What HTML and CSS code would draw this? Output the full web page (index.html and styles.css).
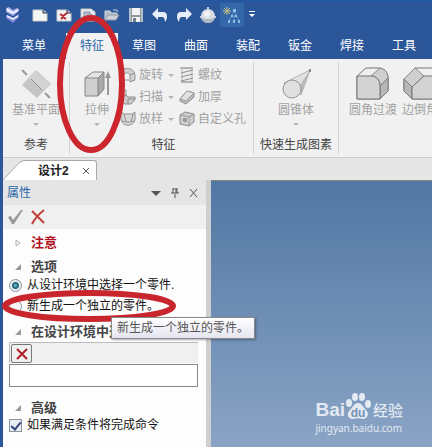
FILE: index.html
```
<!DOCTYPE html>
<html lang="zh-CN">
<head>
	<meta charset="UTF-8">
	<title>设计2</title>
	<link rel="stylesheet" href="styles.css">
</head>
<body>
	<div class="app">
		<div class="quick">
			<svg class="logo" width="16" height="16" viewBox="0 0 16 16"><path d="M1 8l3 1 4 2 6-4v3l-6 6-7-5z" fill="#8185dc"/><path d="M2 8l6 3 5-3v2l-5 3-6-3z" fill="#eceeff"/><path d="M1 1l3-1 4 3 4-2 2 1v2L8 9 1 5z" fill="#a3a8ea"/><path d="M2 1l6 4 5-3v2L8 7 2 4z" fill="#f6f7ff"/></svg>
			<button class="qbtn" aria-label="新建"><svg width="16" height="14" viewBox="0 0 16 14"><path d="M1 2h10l4 3v8H1z" fill="#f4f6f4" stroke="#c9cfcc"/><path d="M11 2v3h4" fill="#ccd" stroke="#222c40"/></svg></button>
			<button class="qbtn" aria-label="新建零件"><svg width="16" height="14" viewBox="0 0 16 14"><path d="M1 2h10l4 3v8H1z" fill="#f4f4f2" stroke="#c9cfcc"/><path d="M11 2v3h4" fill="#ccd" stroke="#222c40"/><path d="M4 6l3 2 4-3M5 11l2-2 3 2" stroke="#b62832" stroke-width="2" fill="none"/></svg></button>
			<button class="qbtn" aria-label="新建图纸"><svg width="16" height="14" viewBox="0 0 16 14"><path d="M1 1h10l4 3v9H1z" fill="#e6eaf0" stroke="#c9cfcc"/><path d="M4 4h6v6H4z" fill="#b8c2cf" stroke="#8995a8"/><circle cx="10" cy="9" r="3" fill="#d8dde4" stroke="#8995a8"/></svg></button>
			<button class="qbtn" aria-label="打开"><svg width="16" height="14" viewBox="0 0 16 14"><path d="M1 12V3h5l1 2h6v2" fill="#b5bcc5" stroke="#d3d7dc"/><path d="M1 12l3-5h11l-3 5z" fill="#cdd2d8" stroke="#8f98a5"/><path d="M9 2h4l1 2" stroke="#c9d1dc" fill="none"/></svg></button>
			<button class="qbtn" aria-label="保存"><svg width="16" height="16" viewBox="0 0 16 16"><path d="M1 1h14v14H1z" fill="#8f9aa6"/><path d="M4 1h8v7H4zM4 10h8v5H4z" fill="#f0f2f3"/><path d="M1 1h2v14H1zM13 1h2v14h-2z" fill="#b5bdc5"/><path d="M5 11h3v4H5z" fill="#707d8c"/></svg></button>
			<button class="qbtn" aria-label="撤销"><svg width="16" height="14" viewBox="0 0 16 14"><path d="M0 6l6-6v4h5c3 0 4 2 4 4 0 3-1 5-2 6 0-3-1-5-3-5H6v3z" fill="#e6eef8"/></svg></button>
			<button class="qbtn" aria-label="重做"><svg width="16" height="14" viewBox="0 0 16 14"><path d="M16 6l-6-6v4H5C2 4 1 6 1 8c0 3 1 5 2 6 0-3 1-5 3-5h4v3z" fill="#e6eef8"/></svg></button>
			<button class="qbtn" aria-label="智能图素"><svg width="16" height="16" viewBox="0 0 16 16"><path d="M8 0v4M0 10h16" stroke="#c2cbd6" stroke-width="2"/><circle cx="8" cy="9" r="7" fill="#d7dde2"/><path d="M1 10c3 3 11 3 14 0-1 8-13 8-14 0z" fill="#adb8c1"/><circle cx="7" cy="7" r="3" fill="#f0f2f5"/></svg></button>
			<button class="qbtn lit" aria-label="设计树"><svg width="18" height="18" viewBox="0 0 18 18"><path d="M4 1v8M0 5h8M1 2l6 6M7 2L1 8" stroke="#c8bf83"/><path d="M11 5l-5 10M11 5l5 10M8 10h6M11 10v5" stroke="#7fa8d6" stroke-dasharray="2 1" fill="none"/><path d="M10 3h3v3h-3zM8 9h2v2H8zM12 9h2v2h-2zM5 14h2v3H5zM10 14h2v3h-2zM15 14h2v3h-2z" fill="#8ec0e6"/></svg></button>
			<button class="qmore" aria-label="更多"><svg width="6" height="7" viewBox="0 0 6 7"><path d="M0 0h6v1H0zM0 3h6L3 6z" fill="#fff"/></svg></button>
		</div>
		<nav class="tabs">
			<button class="tab menu">菜单</button>
			<button class="tab current">特征</button>
			<button class="tab">草图</button>
			<button class="tab">曲面</button>
			<button class="tab">装配</button>
			<button class="tab">钣金</button>
			<button class="tab">焊接</button>
			<button class="tab">工具</button>
		</nav>
		<div class="frame">
			<div class="ribbon">
				<section class="group">
					<div class="tools">
						<button class="big">
							<svg width="32" height="32" viewBox="0 0 32 32"><path d="M2 2l5 5M25 25l5 5" stroke="#999" stroke-width="2"/><path d="M16 2l15 14-14 14L2 17z" fill="#c5c5c5"/><path d="M16 3l14 13-7 7L8 10z" fill="#d2d2d2"/><path d="M11 11l11 11" stroke="#929292"/></svg>
							<span>基准平面</span><i class="caret"></i>
						</button>
					</div>
					<h2>参考</h2>
				</section>
				<section class="group features">
					<div class="tools">
						<button class="big">
							<svg width="32" height="32" viewBox="0 0 32 32"><path d="M4 10l8-6h11l-6 6z" fill="#e5e5e5"/><path d="M17 10l6-6v17l-6 7z" fill="#a9a9a9"/><path d="M4 10h13v18H4z" fill="#cfcfcf"/><path d="M4 10l8-6h11v17l-6 7H4zM4 10h13v18M17 10l6-6" stroke="#858585" fill="none"/><path d="M27 27V8" stroke="#999" stroke-width="2"/><path d="M27 3l3 7h-6z" fill="#999"/></svg>
							<span>拉伸</span><i class="caret"></i>
						</button>
						<div class="smalls">
							<button class="small"><svg width="16" height="16" viewBox="0 0 16 16"><path d="M1 6c1-5 9-7 13-1l1 3v5l-5 2V8c-2-3-5-3-6 0z" fill="#d1d1d1" stroke="#929292"/><path d="M10 8l5-2M3 13h6" stroke="#929292"/></svg><span>旋转</span><i class="caret"></i></button>
							<button class="small"><svg width="16" height="16" viewBox="0 0 16 16"><path d="M1 1h5v5H1z" fill="#ddd" stroke="#999"/><path d="M3 8l3-2 2 2h7v3l-4 4H5c-3-1-3-4-2-7zM8 10v5M8 10h7" fill="#ccc" stroke="#8e8e8e"/></svg><span>扫描</span><i class="caret"></i></button>
							<button class="small"><svg width="16" height="16" viewBox="0 0 16 16"><path d="M1 1l3 2h8l3-2v8c-2 7-12 7-14 0z" fill="#d8d8d8" stroke="#929292"/><path d="M4 3l2 8h5l2-8M6 11l-4-1M11 11l3-1" stroke="#929292" fill="none"/></svg><span>放样</span><i class="caret"></i></button>
						</div>
						<div class="smalls">
							<button class="small"><svg width="16" height="16" viewBox="0 0 16 16"><path d="M3 1h10v14H3z" fill="#ededed" stroke="#b5b5b5"/><path d="M1 1h13M2 6l12-3M2 10l12-3M2 14l12-3M2 15h12" fill="none" stroke="#8e8e8e"/></svg><span>螺纹</span></button>
							<button class="small"><svg width="16" height="16" viewBox="0 0 16 16"><path d="M1 10l7-8 7 2v4l-8 7-6-3z" fill="#bbb" stroke="#8e8e8e"/><path d="M1 10l7-8 7 2-8 8z" fill="#e1e1e1" stroke="#999"/></svg><span>加厚</span></button>
							<button class="small"><svg width="16" height="16" viewBox="0 0 16 16"><path d="M1 4l5-3 9 2v8l-5 4-9-2z" fill="#cdcdcd" stroke="#8e8e8e"/><path d="M1 4l9 2 5-3M10 6v9" stroke="#999" fill="none"/><circle cx="6" cy="9" r="3" fill="#999" stroke="#ddd"/></svg><span>自定义孔</span></button>
						</div>
					</div>
					<h2>特征</h2>
				</section>
				<section class="group shapes">
					<div class="tools">
						<button class="big">
							<svg width="32" height="32" viewBox="0 0 32 32"><path d="M4 15L30 2 21 27z" fill="#e2e2e2" stroke="#b0b0b0"/><path d="M20 17L30 2 21 27z" fill="#b9b9b9"/><ellipse cx="12" cy="21" rx="9" ry="9" fill="#e0e0e0" stroke="#929292"/><path d="M30 1v3" stroke="#888" stroke-width="2"/></svg>
							<span>圆锥体</span><i class="caret"></i>
						</button>
					</div>
					<h2>快速生成图素</h2>
				</section>
				<section class="group edges">
					<div class="tools">
						<button class="big"><svg width="34" height="34" viewBox="0 0 34 34"><path d="M1 9l9-8h12c7 0 10 5 10 10v13l-8 8H1z" fill="#f0f0f0" stroke="#777"/><path d="M15 9l9-8c6 1 8 6 8 10l-8 8c0-5-3-10-9-10z" fill="#cfcfcf" stroke="#888"/><path d="M24 19l8-8v13l-8 8z" fill="#b8b8b8" stroke="#777"/><path d="M1 9h14c6 0 9 5 9 10v13H1z" fill="#d3d3d3" stroke="#777"/></svg><span>圆角过渡</span></button>
						<button class="big"><svg width="34" height="34" viewBox="0 0 34 34"><path d="M1 12L12 1h17l4 5v26H9l-8-8z" fill="#f0f0f0" stroke="#777"/><path d="M1 12L12 1l9 8L9 20z" fill="#cfcfcf" stroke="#888"/><path d="M1 12l8 8v12l-8-8z" fill="#b8b8b8" stroke="#777"/><path d="M9 20L21 9h12v23H9z" fill="#d3d3d3" stroke="#777"/></svg><span>边倒角</span></button>
					</div>
				</section>
			</div>
			<div class="docs">
				<svg width="20" height="20" viewBox="0 0 20 20"><path d="M0 20L17 2l3-1v19z" fill="#fff"/><path d="M0 20L17 2l3-1" fill="none" stroke="#aaa"/></svg>
				<div class="doc"><strong>设计2</strong><button class="x" aria-label="关闭设计2"><svg width="8" height="8" viewBox="0 0 8 8"><path d="M1 1l6 6M7 1L1 7" stroke="#555"/></svg></button></div>
			</div>
			<main class="work">
				<aside class="panel">
					<header class="head">
						<span>属性</span>
						<button aria-label="选项菜单"><svg width="10" height="10" viewBox="0 0 10 10"><path d="M0 3h10L5 8z" fill="#555"/></svg></button>
						<button aria-label="固定"><svg width="10" height="10" viewBox="0 0 10 10"><path d="M3 0v5M3 1h4M7 0v5M6 1v4M1 5h8M5 6v4" stroke="#555" fill="none"/></svg></button>
						<button aria-label="关闭属性"><svg width="10" height="10" viewBox="0 0 10 10"><path d="M1 1l7 8M8 1L1 9" stroke="#555"/></svg></button>
					</header>
					<div class="confirm">
						<button aria-label="确定"><svg width="16" height="16" viewBox="0 0 16 16"><path d="M1 8l3-1 2 4 8-10h2L7 15H5z" fill="#999"/></svg></button>
						<button aria-label="取消"><svg width="14" height="16" viewBox="0 0 14 16"><path d="M1 2l12 12M13 1C8 5 4 9 1 15" stroke="#c0403c" stroke-width="2" fill="none"/></svg></button>
					</div>
					<div class="props">
						<h3 class="warn"><svg width="6" height="8" viewBox="0 0 6 8"><path d="M1 1l4 3-4 3z" fill="none" stroke="#aaa"/></svg>注意</h3>
						<h3><svg width="6" height="6" viewBox="0 0 6 6"><path d="M6 0v6H0z" fill="#999"/></svg>选项</h3>
						<label class="opt"><input type="radio" name="mode" checked>从设计环境中选择一个零件.</label>
						<div class="hinted">
							<label class="opt second"><input type="radio" name="mode">新生成一个独立的零件。</label>
							<svg class="mark wide" viewBox="0 0 174 32"><ellipse cx="87" cy="16" rx="84" ry="13" fill="none" stroke="#c9252d" stroke-width="6"/></svg>
							<div class="tip" role="tooltip">新生成一个独立的零件。</div>
						</div>
						<h3 class="pick"><svg width="6" height="6" viewBox="0 0 6 6"><path d="M6 0v6H0z" fill="#999"/></svg>在设计环境中选</h3>
						<div class="listbar"><button aria-label="清除"><svg width="12" height="12" viewBox="0 0 12 12"><path d="M1 1l10 10M11 1L1 11" stroke="#b02028" stroke-width="2"/></svg></button></div>
						<input class="box" type="text" aria-label="已选零件">
						<h3 class="adv"><svg width="6" height="6" viewBox="0 0 6 6"><path d="M6 0v6H0z" fill="#999"/></svg>高级</h3>
						<label class="opt"><input type="checkbox" checked>如果满足条件将完成命令</label>
					</div>
				</aside>
				<div class="canvas">
					<div class="brand">
						<div class="name"><b>Bai</b><svg width="26" height="28" viewBox="0 0 26 28"><g fill="#e3eaf2"><ellipse cx="4" cy="11" rx="3" ry="4"/><ellipse cx="10" cy="5" rx="3" ry="4"/><ellipse cx="17" cy="5" rx="3" ry="4"/><ellipse cx="23" cy="12" rx="3" ry="4"/><path d="M13 11c4 0 5 4 8 7 4 4 1 9-3 9-3-1-7-1-10 0-5 0-7-5-3-9 3-3 4-7 8-7z"/></g><text x="13" y="25" text-anchor="middle">du</text></svg><span>经验</span></div>
						<div class="site">jingyan.baidu.com</div>
					</div>
				</div>
			</main>
		</div>
		<svg class="mark tall" viewBox="0 0 68 140"><ellipse cx="34" cy="70" rx="31" ry="66" fill="none" stroke="#cc252d" stroke-width="6"/></svg>
	</div>
</body>
</html>
```
FILE: styles.css
```
*{
	margin: 0;
	padding: 0;
	box-sizing: border-box;
}
body{
	font: 12px/16px "Liberation Sans", "Noto Sans CJK SC", sans-serif;
	color: #222;
}
button{
	font: inherit;
	color: inherit;
	background: none;
	border: 0;
}
svg{
	display: block;
	flex: none;
}
.app{
	position: relative;
	display: flex;
	flex-direction: column;
	min-height: 100vh;
	background: #2b579a;
	overflow: hidden;
}
.quick{
	display: flex;
	align-items: center;
	height: 28px;
	padding-left: 5px;
	border-top: 1px solid #1c5aa8;
}
.logo{
	margin-right: 7px;
}
.qbtn{
	display: flex;
	align-items: center;
	justify-content: center;
	width: 24px;
	height: 24px;
}
.lit{
	background: #3568ab;
}
.qmore{
	margin-left: 5px;
}
.tabs{
	display: flex;
	height: 31px;
	padding: 5px 0 0 8px;
	color: #fff;
}
.tab{
	flex: none;
	width: 52px;
}
.menu{
	margin-right: 6px;
}
.tab.current{
	background: #f1f1f1;
	color: #2b66a8;
}
.frame{
	flex: 1;
	display: flex;
	flex-direction: column;
	margin-left: 3px;
	background: #e5e5e5;
}
.ribbon{
	display: flex;
	height: 99px;
	padding: 3px 0;
	background: #f1f1f1;
	border-bottom: 1px solid #ccc;
	overflow: hidden;
}
.group{
	flex: none;
	display: flex;
	flex-direction: column;
	justify-content: space-between;
	padding: 0 8px;
	border-right: 1px solid #d2d2d2;
}
.features{
	padding: 0 7px 0 11px;
}
.group h2{
	font-size: 12px;
	font-weight: normal;
	line-height: 16px;
	text-align: center;
	color: #444;
	margin-bottom: 1px;
}
.shapes{
	padding: 0 6px;
}
.edges{
	padding: 0 9px;
	border: 0;
}
.tools{
	display: flex;
	justify-content: center;
	color: #a2a2a2;
}
.big{
	display: flex;
	flex-direction: column;
	align-items: center;
	padding: 5px 1px 0;
	white-space: nowrap;
}
.big svg{
	height: 34px;
}
.big span{
	padding-top: 1px;
}
.edges .tools{
	gap: 3px;
}
.caret{
	width: 0;
	border: 3px solid transparent;
	border-top-color: #b4b4b4;
	border-bottom: 0;
}
.big .caret{
	margin-top: 5px;
}
.smalls{
	padding-top: 2px;
}
.small{
	display: flex;
	align-items: center;
	gap: 3px;
	height: 22px;
	white-space: nowrap;
}
.features .big{
	width: 32px;
	margin-right: 7px;
}
.small .caret{
	margin: 0 5px 0 2px;
}
.docs{
	display: flex;
	align-items: flex-end;
	height: 22px;
}
.doc{
	display: flex;
	align-items: center;
	gap: 13px;
	height: 20px;
	padding: 0 6px 0 15px;
	background: #fff;
	border: 1px solid #aaa;
	border-width: 1px 1px 0 0;
	border-radius: 0 3px 0 0;
}
.doc strong{
	font-weight: bold;
}
.work{
	flex: 1;
	display: flex;
}
.panel{
	width: 208px;
	flex: none;
	background: #fdfdfd;
	border-right: 5px solid #cfcfcf;
}
.head{
	display: flex;
	align-items: center;
	gap: 9px;
	height: 25px;
	padding: 0 7px 0 4px;
	background: #e5e5e5;
	color: #2b66a8;
}
.head span{
	flex: 1;
}
.confirm{
	display: flex;
	align-items: center;
	gap: 8px;
	height: 24px;
	padding-left: 4px;
	background: #f0f0f0;
}
.props{
	padding: 6px 8px 8px 6px;
}
.props h3{
	display: flex;
	align-items: center;
	font-size: 13px;
	font-weight: bold;
	line-height: 16px;
	white-space: nowrap;
	color: #444;
	padding-left: 6px;
	gap: 10px;
	margin-bottom: 8px;
}
.props .warn{
	color: #b01020;
}
.props h3:nth-child(2){
	margin-bottom: 1px;
}
.opt{
	display: flex;
	align-items: center;
	gap: 5px;
	height: 18px;
	white-space: nowrap;
	color: #111;
}
.opt input{
	appearance: none;
	width: 13px;
	height: 13px;
	background: #f7f7f7;
	border: 1px solid #8a949c;
}
.opt input[type=radio]{
	border-radius: 50%;
}
.opt input[type=radio]:checked{
	background: radial-gradient(circle, #6fc2d4 0, #1e5a70 3px, #e8eef0 4px);
}
.opt input[type=checkbox]:checked{
	background: #e9edf4;
	position: relative;
}
.opt input[type=checkbox]:checked::after{
	content: "";
	position: absolute;
	left: 3px;
	top: 0;
	width: 4px;
	height: 8px;
	border: solid #35477c;
	border-width: 0 2px 2px 0;
	transform: rotate(40deg);
}
.hinted{
	position: relative;
	padding: 3px 0 9px;
}
.mark{
	position: absolute;
	pointer-events: none;
}
.mark.wide{
	left: -7px;
	top: -4px;
	width: 174px;
}
.mark.tall{
	left: 57px;
	top: 14px;
	width: 68px;
}
.tip{
	position: absolute;
	z-index: 1;
	left: 102px;
	top: 23px;
	padding: 2px 5px;
	white-space: nowrap;
	color: #555;
	background: linear-gradient(#fff, #e4e5f0);
	border: 1px solid #8a8a8a;
	box-shadow: 1px 1px 2px #0005;
}
.props .pick{
	margin-bottom: 2px;
	overflow: hidden;
}
.listbar{
	height: 21px;
	background: #f0f0f0;
	border-top: 1px solid #bbb;
	border-left: 1px solid #bbb;
}
.listbar button{
	display: flex;
	align-items: center;
	justify-content: center;
	width: 21px;
	height: 19px;
	margin: 1px;
	border: 1px solid #777;
	border-radius: 2px;
}
.box{
	display: block;
	width: 100%;
	height: 23px;
	margin-top: 1px;
	border: 1px solid #888;
	background: #fff;
}
.props .adv{
	margin: 13px 0 0;
}
.canvas{
	flex: 1;
	display: flex;
	align-items: flex-end;
	justify-content: flex-end;
	padding: 0 29px 11px 0;
	background: linear-gradient(#5177a3, #8aa4c5);
	border-top: 1px solid #888;
}
.brand{
	color: #e3eaf2;
}
.name{
	display: flex;
	align-items: flex-end;
	height: 28px;
}
.name b{
	font-size: 19px;
	line-height: 20px;
}
.name span{
	font-size: 15px;
	font-weight: 500;
	line-height: 18px;
	padding-left: 2px;
}
.name text{
	font: bold 12px "Liberation Sans", sans-serif;
	fill: #7491b5;
}
.site{
	font: 10px/16px "Noto Sans", sans-serif;
}
```
